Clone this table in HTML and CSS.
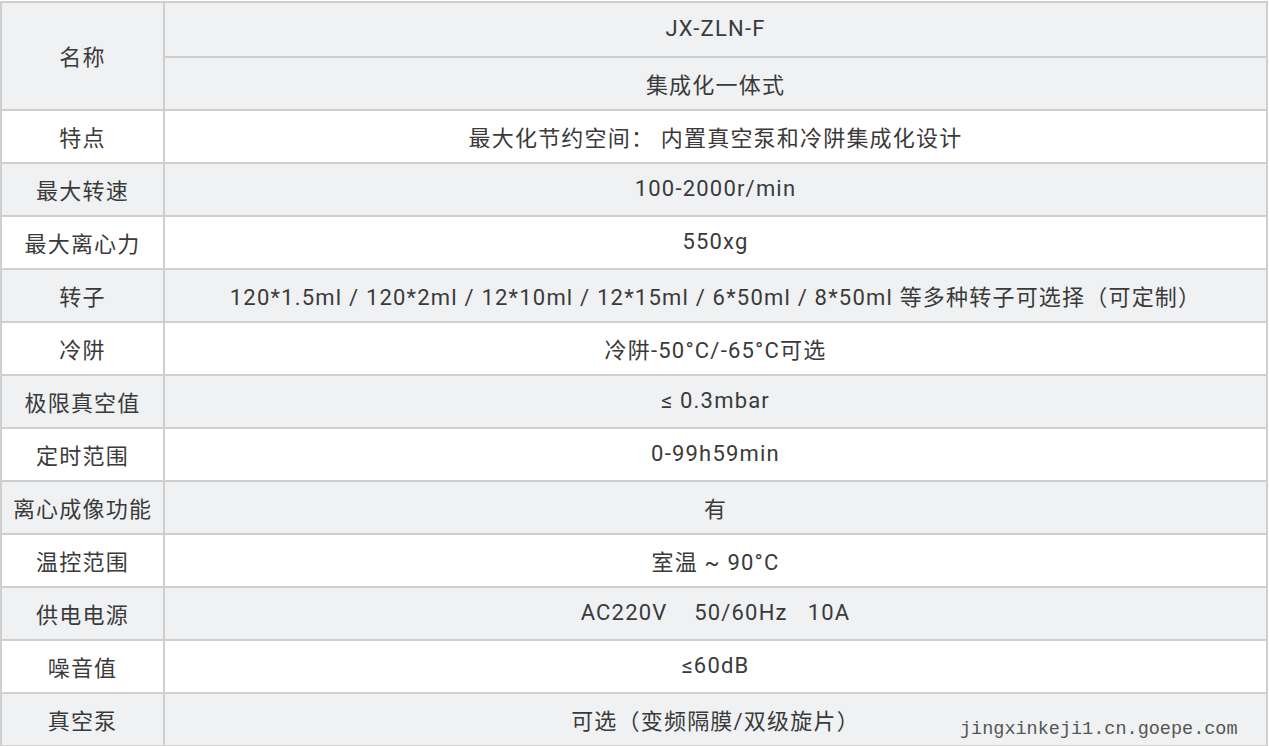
FILE: index.html
```html
<!DOCTYPE html>
<html lang="zh-CN">
<head>
<meta charset="utf-8">
<title>JX-ZLN-F</title>
<link rel="stylesheet" href="styles.css">
</head>
<body>
<div class="wrap">
<table class="spec">
  <tbody>
    <tr class="alt"><td class="key" rowspan="2">名称</td><td class="val">JX-ZLN-F</td></tr>
    <tr class="alt"><td class="val">集成化一体式</td></tr>
    <tr><td class="key">特点</td><td class="val">最大化节约空间： 内置真空泵和冷阱集成化设计</td></tr>
    <tr class="alt"><td class="key">最大转速</td><td class="val">100-2000r/min</td></tr>
    <tr><td class="key">最大离心力</td><td class="val">550xg</td></tr>
    <tr class="alt"><td class="key">转子</td><td class="val">120*1.5ml / 120*2ml / 12*10ml / 12*15ml / 6*50ml / 8*50ml 等多种转子可选择（可定制）</td></tr>
    <tr><td class="key">冷阱</td><td class="val">冷阱-50°C/-65°C可选</td></tr>
    <tr class="alt"><td class="key">极限真空值</td><td class="val">≤ 0.3mbar</td></tr>
    <tr><td class="key">定时范围</td><td class="val">0-99h59min</td></tr>
    <tr class="alt"><td class="key">离心成像功能</td><td class="val">有</td></tr>
    <tr><td class="key">温控范围</td><td class="val">室温 ~ 90°C</td></tr>
    <tr class="alt"><td class="key">供电电源</td><td class="val">AC220V&nbsp;&nbsp;&nbsp; 50/60Hz&nbsp;&nbsp; 10A</td></tr>
    <tr><td class="key">噪音值</td><td class="val">≤60dB</td></tr>
    <tr class="alt"><td class="key">真空泵</td><td class="val">可选（变频隔膜/双级旋片）</td></tr>
  </tbody>
</table>
<div class="mark">jingxinkeji1.cn.goepe.com</div>
</div>
</body>
</html>
```

FILE: styles.css
```css
html, body {
  margin: 0;
  padding: 0;
  background: #ffffff;
}
body {
  padding-top: 1px;
}
.wrap {
  position: relative;
  width: 1268px;
}
.spec {
  width: 1268px;
  border-collapse: separate;
  border-spacing: 0;
  border-top: 2px solid #cfcfcf;
  border-left: 2px solid #cfcfcf;
  table-layout: fixed;
  font-family: Roboto, "Noto Sans CJK SC", sans-serif;
  font-size: 22px;
  color: #3a3a3a;
}
.spec tr {
  height: 53px;
}
.spec tr:first-child {
  height: 55px;
}
.spec td {
  border-right: 2px solid #cfcfcf;
  border-bottom: 2px solid #cfcfcf;
  text-align: center;
  vertical-align: middle;
  padding: 0 0 2px 0;
  letter-spacing: 1.2px;
  white-space: nowrap;
}
.spec .key {
  width: 161px;
}
.spec tr.alt td {
  background: #f0f1f3;
}
.mark {
  position: absolute;
  left: 960px;
  top: 719px;
  font-family: "Liberation Mono", "DejaVu Sans Mono", monospace;
  font-size: 18.5px;
  line-height: 20px;
  color: #555555;
  letter-spacing: 0;
}
```
